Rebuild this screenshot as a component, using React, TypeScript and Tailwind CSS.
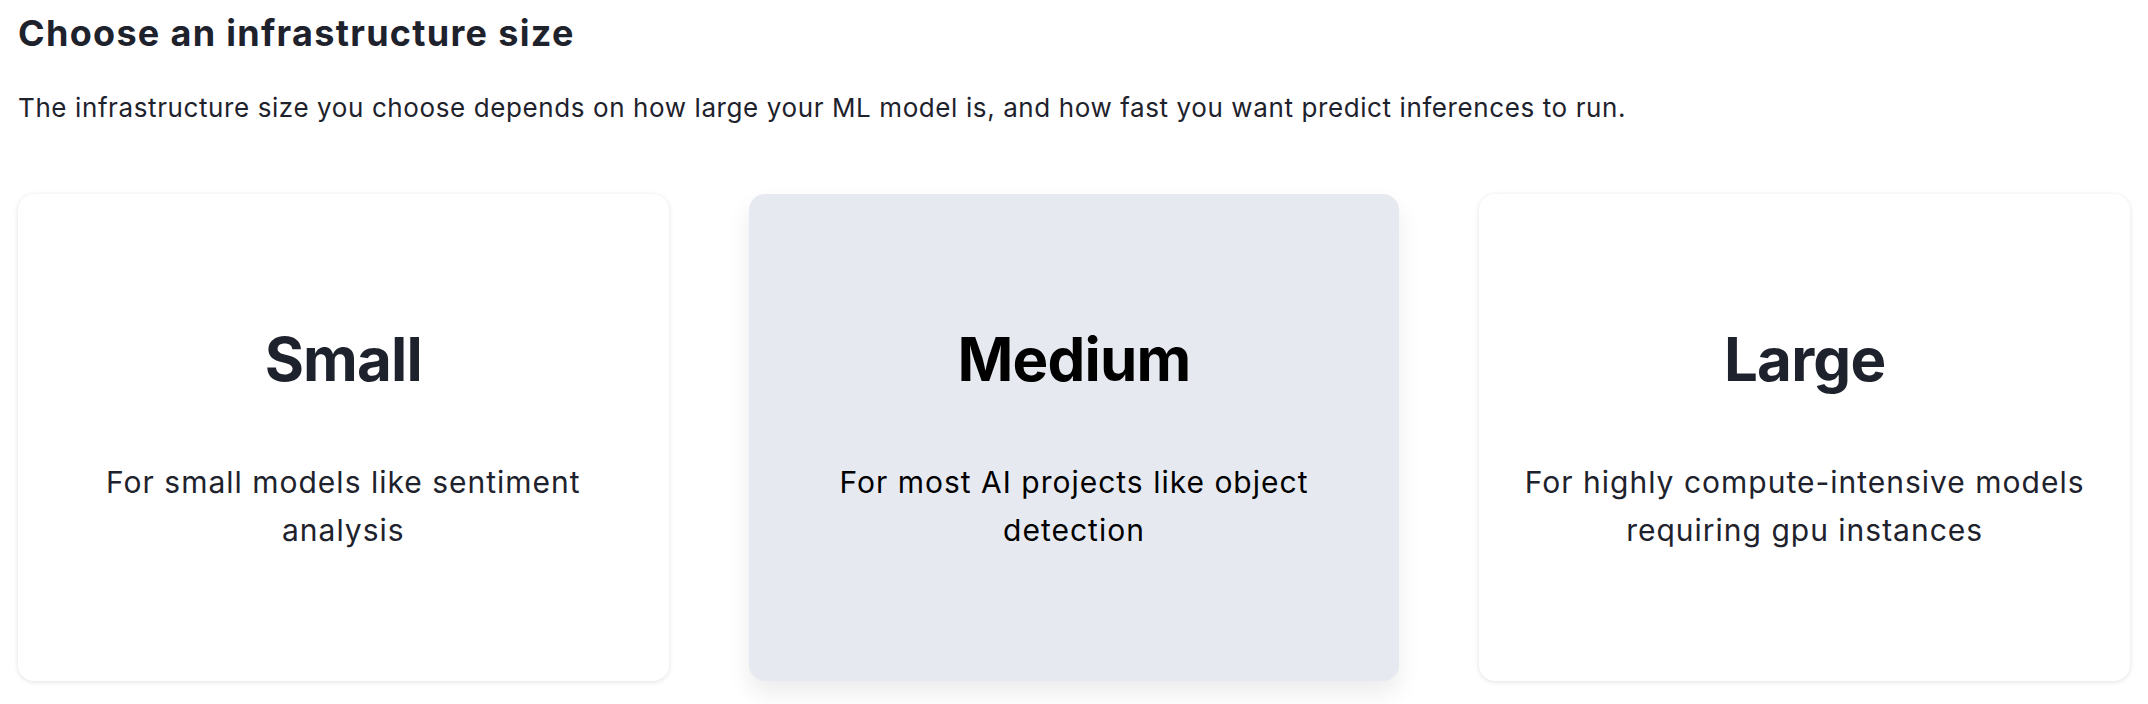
const sizes = [
  { name: "Small", text: "For small models like sentiment analysis", active: false },
  { name: "Medium", text: "For most AI projects like object detection", active: true },
  { name: "Large", text: "For highly compute-intensive models requiring gpu instances", active: false },
];

export default function App() {
  return (
    <div className="min-h-screen bg-white px-[18px] pt-[13px] font-['Inter',sans-serif] text-[#1e222c]">
      <h1 className="text-[36px] font-bold leading-[40px] tracking-[1.3px]">Choose an infrastructure size</h1>
      <p className="mt-[37px] text-[26px] leading-[36px] tracking-[0.6px]">
        The infrastructure size you choose depends on how large your ML model is, and how fast you want predict inferences to run.
      </p>

      <div className="mt-[68px] grid grid-cols-3 gap-[80px]">
        {sizes.map((s) => (
          <div
            key={s.name}
            className={
              s.active
                ? "flex h-[487px] flex-col items-center rounded-2xl bg-[#e7e9f1] px-[36px] pt-[135px] text-black shadow-[0_12px_24px_rgba(0,0,0,0.08)]"
                : "flex h-[487px] flex-col items-center rounded-2xl bg-white px-[36px] pt-[135px] shadow-[0_1px_5px_rgba(0,0,0,0.12)]"
            }
          >
            <h2 className="text-[60px] font-bold leading-[60px] tracking-[-0.8px]">{s.name}</h2>
            <p className="mt-[69px] max-w-[575px] text-center text-[30px] leading-[48px] tracking-[1px]">{s.text}</p>
          </div>
        ))}
      </div>
    </div>
  );
}
